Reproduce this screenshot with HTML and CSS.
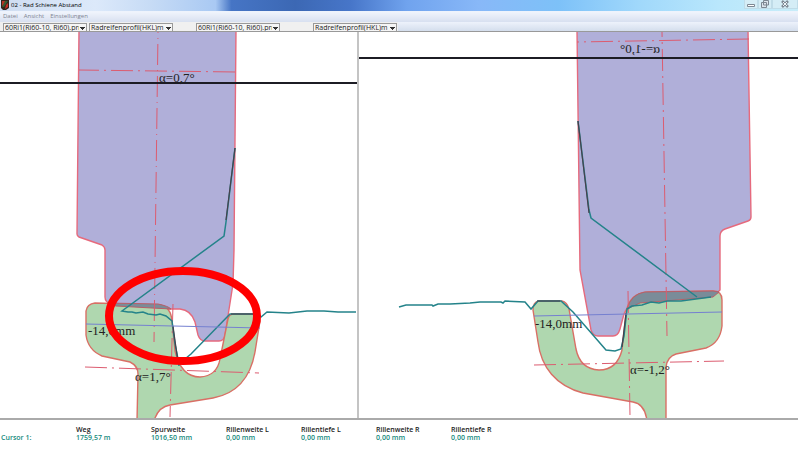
FILE: index.html
```html
<!DOCTYPE html>
<html lang="de">
<head>
<meta charset="utf-8">
<title>02 - Rad Schiene Abstand</title>
<link rel="stylesheet" href="styles.css">
</head>
<body>
<div class="window">
  <header class="titlebar">
    <svg class="app-icon" viewBox="0 0 8 10" aria-hidden="true">
      <path d="M0 0H8V8L5 10H2L0 8Z" fill="#32251c"/>
      <path d="M1 1H4V4L1 6Z" fill="#b53324"/>
      <path d="M5 5L7 3V7L4 9Z" fill="#c52d21"/>
      <path d="M4 1H7L3 7H1Z" fill="#355b32"/>
    </svg>
    <h1 class="title">02 - Rad Schiene Abstand</h1>
    <div class="controls">
      <button type="button" aria-label="Minimieren"><svg viewBox="0 0 10 8"><path d="M1.500 4.500H8.500V6.500H1.500Z" fill="#fff" stroke="#7d8792"/></svg></button>
      <button type="button" aria-label="Wiederherstellen"><svg viewBox="0 0 10 8"><path d="M3.500 .5H8.500V5H3.500ZM1.500 2.500H6.500V7.500H1.500Z" fill="#dce5ec" stroke="#7d8792"/></svg></button>
      <button type="button" aria-label="Schließen" class="close"><svg viewBox="0 0 10 8"><path d="M2 1L8 7M8 1L2 7" stroke="#7d8792" stroke-width="2.500"/><path d="M3 2L7 6M7 2L3 6" stroke="#eef4f8"/></svg></button>
    </div>
  </header>
  <nav class="menu">
    <a href="#">Datei</a><a href="#">Ansicht</a><a href="#">Einstellungen</a>
  </nav>
  <div class="toolbar">
    <div class="tools">
      <div class="pair">
        <select aria-label="Schienenprofil links"><option>60Ri1(Ri60-10, Ri60).prı</option></select>
        <select aria-label="Radprofil links"><option>Radreifenprofil(HKL)m</option></select>
      </div>
      <select aria-label="Schienenprofil rechts"><option>60Ri1(Ri60-10, Ri60).prı</option></select>
      <select class="last" aria-label="Radprofil rechts"><option>Radreifenprofil(HKL)m</option></select>
    </div>
  </div>
  <main class="views">
    <svg class="view" viewBox="0 32 357 386" role="img" aria-label="Rad und Schiene links">
      <path class="wheel" d="M79 30L77 234Q77 236 79 237L102 245Q105 247 105 250V297Q105 303 112 304L160 309H180Q191 310 195 322L198 335Q200 341 205 341H219Q224 341 225 335L233 284L234 250L236 30Z"/>
      <path class="rail" d="M137 421L138 374Q138 366 130 362L102 356Q88 350 86 335V311Q87 304 95 303L160 305Q171 307 172 321L175 351Q181 377 200 377Q217 376 220 359L228 319Q229 314 234 314H253Q260 314 260 321L255 352C250 380 235 394 213 398L170 405Q158 407 154 421Z"/>
      <path class="overlap" d="M107 303L158 304Q168 306 171 309L152 308L116 306Z"/>
      <path class="axis wheel-left" d="M158 32L154 342"/>
      <path class="axis" stroke-dashoffset="2" d="M79 70L236 72"/>
      <path class="axis" d="M85 367L259 373"/>
      <path class="axis" d="M173 304L170 417"/>
      <path class="measure" d="M235 148L226 222L224 236L122 311L128 312L132 312L136 313L143 312L148 314L156 315L160 314L166 316L172 321L175 344L178 359L179 366M180 363L191 354L230 314L258 314L261 317L267 312L289 313L307 311L324 311L338 312L356 312"/>
      <path class="contact" d="M235 148L226 220M231 314H254M173 326L178 362"/>
      <path class="level" d="M86 324L260 328"/>
      <path class="horizon" d="M0 83H357"/>
      <text x="159" y="82">α=0,7°</text>
      <text x="88" y="335">-14,0mm</text>
      <text x="135" y="381">α=1,7°</text>
      <ellipse class="marker" cx="183" cy="316" rx="74" ry="45"/>
    </svg>
    <svg class="view" viewBox="359 32 439 386" role="img" aria-label="Rad und Schiene rechts">
      <path class="wheel" d="M577 30L580 270L591 330Q593 336 598 336H613Q618 336 620 329L624 314Q627 306 636 303L713 297L720 290V236Q720 231 725 229L748 221Q751 220 751 217L748 30Z"/>
      <path class="rail" d="M647 421Q645 404 633 402L583 393C556 386 541 367 538 342L533 310Q533 302 539 301H562Q567 302 569 309L576 349Q580 369 599 370Q617 370 622 350L626 313Q629 293 648 292L713 291Q722 291 722 300V326Q720 343 706 348L676 354Q667 357 666 367V421Z"/>
      <path class="overlap" d="M627 309Q631 294 645 292L713 291L719 292L713 297L640 303Z"/>
      <path class="axis wheel-right" d="M662 32L667 336"/>
      <path class="axis" stroke-dashoffset="20" d="M577 42L749 39"/>
      <path class="axis" d="M534 365L724 361"/>
      <path class="axis" d="M628 291L630 416"/>
      <path class="measure" d="M578 121L589 210L591 218L697 297M399 307L406 305L432 305L433 306L438 304L450 304L470 303L480 302L501 302L503 303L505 301L525 302L531 309L538 301L561 301L573 312L606 350L615 351L621 349L624 336L627 309L632 306L642 305L651 302L659 303L667 301L681 301L711 297"/>
      <path class="contact" d="M578 121L589 213M537 301H560M626 313L622 347"/>
      <path class="level" d="M534 316L722 312"/>
      <path class="horizon" d="M359 58H798"/>
      <text class="flipped" x="-660" y="53">α=-1,0°</text>
      <text x="535" y="328">-14,0mm</text>
      <text x="630" y="374">α=-1,2°</text>
    </svg>
  </main>
  <table class="readout">
    <thead><tr><td></td><th>Weg</th><th>Spurweite</th><th>Rillenweite L</th><th>Rillentiefe L</th><th>Rillenweite R</th><th>Rillentiefe R</th><td></td></tr></thead>
    <tbody><tr><th>Cursor 1:</th><td>1759,57 m</td><td>1016,50 mm</td><td>0,00 mm</td><td>0,00 mm</td><td>0,00 mm</td><td>0,00 mm</td><td></td></tr></tbody>
  </table>
</div>
</body>
</html>
```
FILE: styles.css
```css
* { box-sizing: border-box; }
body {
  margin: 0;
  background: #fff;
  color: #222;
  font: 6px/9px "Open Sans", sans-serif;
}
.window {
  display: grid;
  grid-template-rows: 12px 10px 10px auto auto;
  margin-right: 2px;
}
.titlebar {
  display: flex;
  align-items: flex-start;
  gap: 2px;
  padding-left: 1px;
  border-bottom: 1px solid #eef3fc;
  background: linear-gradient(90deg, #cfddf1 0%, #dce9fa 12%, #c6dbf5 19%, #a9c9f3 27%, #4675c5 29%, #3c68b4 37%, #4776c9 44%, #70a3ee 51%, #88b8f8 60%, #7dc1f8 70%, #a0d8fb 80%, #b9e7fc 90%, #c8edf9 100%);
}
.app-icon { width: 8px; height: 10px; }
.title { margin: 0; font-size: 6px; line-height: 11px; font-weight: 400; color: #000; }
.controls { display: flex; margin-left: auto; }
.controls button {
  width: 14px;
  height: 9px;
  padding: 0;
  border: 1px solid #c0dce8;
  border-top: 0;
  background: #d5edf6;
  display: grid;
  place-items: center;
}
.controls svg { width: 10px; height: 8px; }
.controls .close { width: 26px; }
.menu {
  display: flex;
  gap: 6px;
  padding-left: 3px;
  background: linear-gradient(#f0f4fc, #d8e0f0);
}
.menu a { color: #7d8492; text-decoration: none; }
.toolbar {
  display: flex;
  border-bottom: 1px solid #999;
  background: linear-gradient(#edf2fb, #d4deed);
}
.tools {
  display: flex;
  width: 398px;
  padding: 1px 1px 0 3px;
  background: #f0f0f0;
}
.pair { display: flex; gap: 2px; margin-right: 23px; }
select {
  appearance: none;
  width: 84px;
  height: 8px;
  padding: 0 7px 0 1px;
  border: 1px solid #999;
  border-bottom: 0;
  border-radius: 0;
  background: linear-gradient(#333, #333) 76px 3px / 5px 1px no-repeat, linear-gradient(#333, #333) 77px 4px / 3px 1px no-repeat, linear-gradient(#333, #333) 78px 5px / 1px 1px no-repeat, #f5f5f5;
  color: #222;
  font: 7px/8px "Open Sans", sans-serif;
}
.last { margin-left: auto; }
.views {
  display: grid;
  grid-template-columns: 357fr 439fr;
  gap: 2px;
  background: #c4c4c4;
  border-bottom: 2px solid #aaa;
}
.view { display: block; width: 100%; background: #fff; }
.view path, .view ellipse { fill: none; }
.view .wheel { fill: #b0afd9; stroke: #e66a7d; stroke-width: 1.4; }
.view .rail { fill: #afd7af; stroke: #d96f65; stroke-width: 1.4; }
.view .overlap { fill: #7a8c99; stroke: #b85e68; }
.axis { stroke: #dc5c70; stroke-dasharray: 22 5 2 5; }
.wheel-left { stroke-dasharray: 21 5 1 5; stroke-dashoffset: 20; }
.wheel-right { stroke-dashoffset: 17; }
.measure { stroke: #24838a; stroke-width: 1.5; }
.contact { stroke: #47404c; stroke-width: 1.2; }
.level { stroke: #7580d0; }
.horizon { stroke: #1c1c24; stroke-width: 2; }
.marker { stroke: #f00; stroke-width: 8; }
.view text { fill: #222; font: 13px "Liberation Serif", serif; }
.flipped { transform: scaleX(-1); }
.readout {
  width: 100%;
  margin-top: 6px;
  border-spacing: 0;
  table-layout: fixed;
  font: 7px/8px "Open Sans", sans-serif;
}
.readout th, .readout td { width: 75px; padding: 0 0 0 1px; text-align: left; font-weight: 600; white-space: nowrap; }
.readout td:last-child { width: auto; }
.readout tbody { color: #12897c; }
```
